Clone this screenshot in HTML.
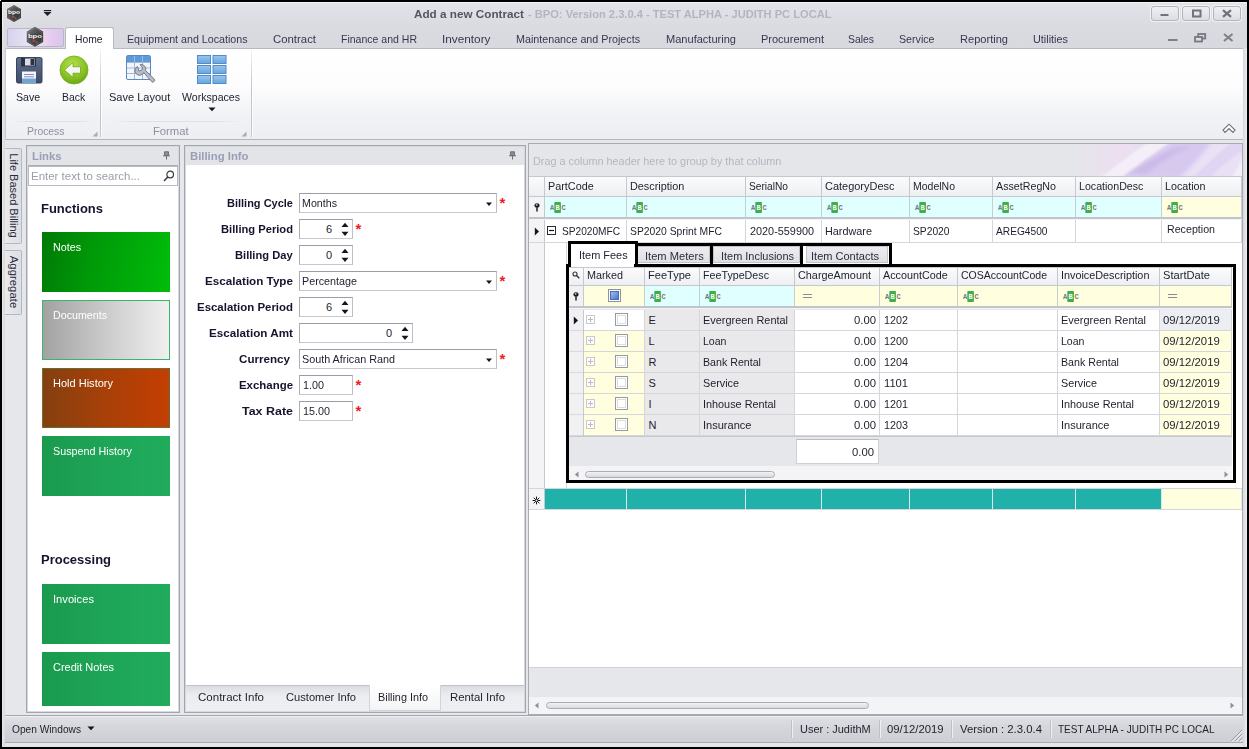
<!DOCTYPE html>
<html><head><meta charset="utf-8"><title>Add a new Contract</title>
<style>

html,body{margin:0;padding:0}
body{width:1249px;height:749px;position:relative;overflow:hidden;background:#000;font-family:"Liberation Sans",sans-serif;font-size:11px}
div,span.t,svg{position:absolute;box-sizing:border-box}
span.t{white-space:pre}

</style></head>
<body>
<div style="left:0px;top:0px;width:1249px;height:749px;background:#000"></div>
<div style="left:2px;top:2px;width:1245px;height:745px;background:linear-gradient(#e3e4e9 0,#dadbe1 24px,#d8d9df 48px,#dddee3 100%)"></div>
<div style="left:2px;top:2px;width:1245px;height:1px;background:#f4f4f7"></div>
<div style="left:2px;top:2px;width:1px;height:25px;background:#f0f0f4"></div>
<div style="left:0px;top:0px;width:1px;height:1px;background:#fff"></div>
<svg style="left:6px;top:5px" width="16" height="17" viewBox="0 0 16 17"><defs><linearGradient id="hxg" x1="0" y1="0" x2="1" y2="1"><stop offset="0" stop-color="#7a7a7c"/><stop offset="0.5" stop-color="#4a4a4c"/><stop offset="1" stop-color="#2b2b2d"/></linearGradient></defs><polygon points="8,0 15,4 15,13 8,17 1,13 1,4" fill="url(#hxg)"/><polygon points="8,1 14,4.6 14,12.4 8,16 2,12.4 2,4.6" fill="none" stroke="#8c8c8e" stroke-width="0.5" opacity="0.7"/><rect x="1.6" y="6.6" width="12.8" height="3.2" fill="#2a2a2c" opacity="0.6"/><text x="8" y="9.4" text-anchor="middle" font-family="Liberation Sans, sans-serif" font-weight="bold" font-size="4.6" textLength="12" lengthAdjust="spacingAndGlyphs" fill="#fff">bpo</text><rect x="6" y="11" width="2.2" height="2" fill="#c8343a"/><rect x="8.6" y="12.6" width="1.6" height="1.4" fill="#3d8a5a"/></svg>
<svg style="left:43px;top:9px" width="9" height="8" viewBox="0 0 9 8"><rect x="0.8" y="1" width="7.4" height="1.2" fill="#1e1e2d"/><polygon points="0.5,3 8.5,3 4.5,7" fill="#1e1e2d"/></svg>
<span class="t" style="font-size:11px;line-height:15px;color:#55565f;top:7px;left:414.4px;transform:scaleX(1.0649);transform-origin:0 50%;font-weight:bold;">Add a new Contract</span>
<span class="t" style="font-size:11px;line-height:15px;color:#b3b5be;top:7px;left:527.9px;transform:scaleX(1.0099);transform-origin:0 50%;font-weight:bold;">- BPO: Version 2.3.0.4 - TEST ALPHA - JUDITH PC LOCAL</span>
<div style="left:1151px;top:6px;width:28px;height:15px;border:1px solid #b4b6bf;border-radius:3px;background:linear-gradient(#f0f0f3,#dcdde2);box-shadow:0 0 0 1px rgba(255,255,255,.6)"></div>
<div style="left:1182px;top:6px;width:28px;height:15px;border:1px solid #b4b6bf;border-radius:3px;background:linear-gradient(#f0f0f3,#dcdde2);box-shadow:0 0 0 1px rgba(255,255,255,.6)"></div>
<div style="left:1213px;top:6px;width:28px;height:15px;border:1px solid #b4b6bf;border-radius:3px;background:linear-gradient(#f0f0f3,#dcdde2);box-shadow:0 0 0 1px rgba(255,255,255,.6)"></div>
<svg style="left:1160px;top:13px" width="10" height="4" viewBox="0 0 10 4"><rect x="0.5" y="1" width="8" height="2" fill="#6f717d"/></svg>
<svg style="left:1192px;top:9px" width="10" height="9" viewBox="0 0 10 9"><rect x="1" y="1.5" width="7.5" height="6" fill="none" stroke="#6f717d" stroke-width="2"/></svg>
<svg style="left:1222px;top:9px" width="10" height="9" viewBox="0 0 10 9"><path d="M1 1.2 L9 7.8 M9 1.2 L1 7.8" stroke="#6f717d" stroke-width="2.2"/></svg>
<div style="left:7px;top:28px;width:57px;height:19px;border:1px solid #b9b6c6;border-radius:2px;background:linear-gradient(90deg,#d6d2ee 0,#e6e0f4 30%,#eedff3 55%,#e6c9ee 80%,#d9c6ec 100%)"></div>
<svg style="left:25px;top:26px" width="20" height="22" viewBox="0 0 20 22"><g transform="translate(0.6,0.8) scale(1.17)"><defs><linearGradient id="hxg2" x1="0" y1="0" x2="1" y2="1"><stop offset="0" stop-color="#7a7a7c"/><stop offset="0.5" stop-color="#4a4a4c"/><stop offset="1" stop-color="#2b2b2d"/></linearGradient></defs><polygon points="8,0 15,4 15,13 8,17 1,13 1,4" fill="url(#hxg2)"/><polygon points="8,1 14,4.6 14,12.4 8,16 2,12.4 2,4.6" fill="none" stroke="#8c8c8e" stroke-width="0.5" opacity="0.7"/><rect x="1.6" y="6.6" width="12.8" height="3.2" fill="#2a2a2c" opacity="0.6"/><text x="8" y="9.4" text-anchor="middle" font-family="Liberation Sans, sans-serif" font-weight="bold" font-size="4.6" textLength="12" lengthAdjust="spacingAndGlyphs" fill="#fff">bpo</text><rect x="6" y="11" width="2.2" height="2" fill="#c8343a"/><rect x="8.6" y="12.6" width="1.6" height="1.4" fill="#3d8a5a"/></g></svg>
<div style="left:65px;top:27px;width:49px;height:22px;background:#fff;border:1px solid #b8bac2;border-bottom:none;border-radius:3px 3px 0 0"></div>
<span class="t" style="font-size:11px;line-height:15px;color:#1e1e2d;top:31.5px;left:74.9px;transform:scaleX(0.9372);transform-origin:0 50%;">Home</span>
<span class="t" style="font-size:11px;line-height:15px;color:#35374f;top:31.5px;left:127.4px;transform:scaleX(0.9706);transform-origin:0 50%;">Equipment and Locations</span>
<span class="t" style="font-size:11px;line-height:15px;color:#35374f;top:31.5px;left:273.15px;transform:scaleX(1.0342);transform-origin:0 50%;">Contract</span>
<span class="t" style="font-size:11px;line-height:15px;color:#35374f;top:31.5px;left:340.65px;transform:scaleX(0.956);transform-origin:0 50%;">Finance and HR</span>
<span class="t" style="font-size:11px;line-height:15px;color:#35374f;top:31.5px;left:441.9px;transform:scaleX(1.0718);transform-origin:0 50%;">Inventory</span>
<span class="t" style="font-size:11px;line-height:15px;color:#35374f;top:31.5px;left:516.15px;transform:scaleX(0.9749);transform-origin:0 50%;">Maintenance and Projects</span>
<span class="t" style="font-size:11px;line-height:15px;color:#35374f;top:31.5px;left:665.65px;transform:scaleX(1.004);transform-origin:0 50%;">Manufacturing</span>
<span class="t" style="font-size:11px;line-height:15px;color:#35374f;top:31.5px;left:760.65px;transform:scaleX(1.0002);transform-origin:0 50%;">Procurement</span>
<span class="t" style="font-size:11px;line-height:15px;color:#35374f;top:31.5px;left:848.15px;transform:scaleX(0.9444);transform-origin:0 50%;">Sales</span>
<span class="t" style="font-size:11px;line-height:15px;color:#35374f;top:31.5px;left:899.4px;transform:scaleX(0.9676);transform-origin:0 50%;">Service</span>
<span class="t" style="font-size:11px;line-height:15px;color:#35374f;top:31.5px;left:959.65px;transform:scaleX(1.0062);transform-origin:0 50%;">Reporting</span>
<span class="t" style="font-size:11px;line-height:15px;color:#35374f;top:31.5px;left:1032.9px;transform:scaleX(0.9872);transform-origin:0 50%;">Utilities</span>
<svg style="left:1167px;top:38px" width="12" height="4" viewBox="0 0 12 4"><rect x="1" y="1" width="9.5" height="2" fill="#7d7f8a"/></svg>
<svg style="left:1194px;top:33px" width="13" height="10" viewBox="0 0 13 10"><rect x="4.2" y="1" width="7" height="4.5" fill="none" stroke="#757783" stroke-width="1.8"/><rect x="1" y="4" width="7" height="4.5" fill="#dcdde2" stroke="#757783" stroke-width="1.8"/></svg>
<svg style="left:1223px;top:33px" width="11" height="9" viewBox="0 0 11 9"><path d="M1 1 L9.5 8 M9.5 1 L1 8" stroke="#7d7f8a" stroke-width="2"/></svg>
<div style="left:5px;top:48px;width:1239px;height:92px;background:linear-gradient(#fff 0,#fdfdfe 40%,#f1f2f5 75%,#eceef1 100%);border-top:1px solid #b8bac2;border-bottom:1px solid #b4b6be;border-left:1px solid #c9cbd1;border-right:1px solid #c9cbd1"></div>
<div style="left:66px;top:48px;width:47px;height:1px;background:#fff"></div>
<div style="left:100px;top:50px;width:1px;height:87px;background:linear-gradient(#f4f4f6,#c4c6cd 40%,#c4c6cd)"></div>
<div style="left:101px;top:50px;width:1px;height:87px;background:rgba(255,255,255,.8)"></div>
<div style="left:251px;top:50px;width:1px;height:87px;background:linear-gradient(#f4f4f6,#c4c6cd 40%,#c4c6cd)"></div>
<div style="left:252px;top:50px;width:1px;height:87px;background:rgba(255,255,255,.8)"></div>
<div style="left:14px;top:121px;width:80px;height:1px;background:linear-gradient(90deg,rgba(220,222,228,0),#dfe0e5 20%,#dfe0e5 80%,rgba(220,222,228,0))"></div>
<div style="left:112px;top:121px;width:130px;height:1px;background:linear-gradient(90deg,rgba(220,222,228,0),#dfe0e5 20%,#dfe0e5 80%,rgba(220,222,228,0))"></div>
<span class="t" style="font-size:11px;line-height:15px;color:#8d8fa0;top:123.5px;left:26.9px;transform:scaleX(0.9434);transform-origin:0 50%;">Process</span>
<span class="t" style="font-size:11px;line-height:15px;color:#8d8fa0;top:123.5px;left:153px;transform:scaleX(1.0217);transform-origin:0 50%;">Format</span>
<svg style="left:92px;top:131px" width="6" height="6" viewBox="0 0 6 6"><polygon points="5.5,0.5 5.5,5.5 0.5,5.5" fill="#a9abb5"/></svg>
<svg style="left:241px;top:131px" width="6" height="6" viewBox="0 0 6 6"><polygon points="5.5,0.5 5.5,5.5 0.5,5.5" fill="#a9abb5"/></svg>
<svg style="left:16px;top:57px" width="27" height="27" viewBox="0 0 27 27"><defs><linearGradient id="fl" x1="0" y1="0" x2="0" y2="1"><stop offset="0" stop-color="#5f6f8f"/><stop offset="1" stop-color="#3f4b66"/></linearGradient></defs>
<rect x="0.5" y="0.5" width="25.5" height="25.5" rx="1.5" fill="url(#fl)" stroke="#39445c"/>
<rect x="5" y="1" width="15" height="8.5" fill="#2c3142"/><rect x="9" y="1.5" width="9.5" height="7" fill="#d9dde6"/><rect x="14.5" y="2" width="3.5" height="6" fill="#2c3142"/>
<rect x="6" y="14.5" width="14" height="11" fill="#f4f6fa"/><rect x="6" y="21.5" width="14" height="4" fill="#6aa7d8"/><rect x="8" y="17" width="10" height="1" fill="#8f86c8"/><rect x="8" y="19.3" width="10" height="1" fill="#8f86c8"/></svg>
<svg style="left:59px;top:55px" width="30" height="30" viewBox="0 0 30 30"><defs><radialGradient id="gb" cx="0.45" cy="0.3" r="0.8"><stop offset="0" stop-color="#b4e04a"/><stop offset="0.6" stop-color="#86c122"/><stop offset="1" stop-color="#5f9a12"/></radialGradient></defs>
<circle cx="15" cy="15" r="14" fill="url(#gb)" stroke="#73ab1b" stroke-width="0.8"/>
<path d="M5.5 15 L14 7.5 L14 11.8 L21.5 11.8 L21.5 18.2 L14 18.2 L14 22.5 Z" fill="#f4f8ec" stroke="#5c8f16" stroke-width="0.6"/></svg>
<svg style="left:125px;top:54px" width="31" height="32" viewBox="0 0 31 32"><rect x="1.5" y="1.5" width="24" height="24" rx="1.5" fill="#f3f6fb" stroke="#5d86c4"/>
<rect x="2" y="2" width="23" height="6" fill="#5b9bd8"/>
<path d="M9.5 2 V25 M17.5 2 V25 M2 8.5 H25 M2 14 H25 M2 19.5 H25" stroke="#9fb9dd" stroke-width="1" fill="none"/>
<path d="M12.5 12.5 a4.6 4.6 0 1 0 6.2 6 L26.5 27.5 a1.8 1.8 0 0 0 2.6 -2.6 L20.6 16.6 a4.6 4.6 0 0 0 -5.6 -5.9 l2.6 2.7 -0.9 2.8 -2.8 0.8 z" fill="#b7bcc6" stroke="#6c727f" stroke-width="0.9"/></svg>
<svg style="left:197px;top:55px" width="30" height="30" viewBox="0 0 30 30"><defs><linearGradient id="wsg" x1="0" y1="0" x2="0" y2="1"><stop offset="0" stop-color="#9ac6ee"/><stop offset="1" stop-color="#67a4dc"/></linearGradient></defs><rect x="0.5" y="0.5" width="13" height="8" fill="url(#wsg)" stroke="#4f8ccb" stroke-width="1"/><rect x="16.0" y="0.5" width="13" height="8" fill="url(#wsg)" stroke="#4f8ccb" stroke-width="1"/><rect x="0.5" y="10.5" width="13" height="8" fill="url(#wsg)" stroke="#4f8ccb" stroke-width="1"/><rect x="16.0" y="10.5" width="13" height="8" fill="url(#wsg)" stroke="#4f8ccb" stroke-width="1"/><rect x="0.5" y="20.5" width="13" height="8" fill="url(#wsg)" stroke="#4f8ccb" stroke-width="1"/><rect x="16.0" y="20.5" width="13" height="8" fill="url(#wsg)" stroke="#4f8ccb" stroke-width="1"/></svg>
<span class="t" style="font-size:11px;line-height:15px;color:#1e1e2d;top:89.5px;left:16.1px;transform:scaleX(0.969);transform-origin:0 50%;">Save</span>
<span class="t" style="font-size:11px;line-height:15px;color:#1e1e2d;top:89.5px;left:61.8px;transform:scaleX(0.9481);transform-origin:0 50%;">Back</span>
<span class="t" style="font-size:11px;line-height:15px;color:#1e1e2d;top:89.5px;left:109px;transform:scaleX(1.0024);transform-origin:0 50%;">Save Layout</span>
<span class="t" style="font-size:11px;line-height:15px;color:#1e1e2d;top:89.5px;left:182.4px;transform:scaleX(0.9614);transform-origin:0 50%;">Workspaces</span>
<svg style="left:208px;top:107px" width="8" height="5" viewBox="0 0 8 5"><polygon points="0.5,0.5 7.5,0.5 4,4.3" fill="#15151f"/></svg>
<svg style="left:1222px;top:123px" width="14" height="11" viewBox="0 0 14 11"><path d="M7 1.2 L13 7 L11 9.4 L7 5.6 L3 9.4 L1 7 Z" fill="#fff" stroke="#6f7079" stroke-width="1.1" stroke-linejoin="miter"/></svg>
<div style="left:5px;top:140px;width:1239px;height:575px;background:#e6e7eb"></div>
<div style="left:5px;top:148px;width:17px;height:96px;border:1px solid #b6b8c0;border-left:none;border-radius:0 2px 2px 0;background:linear-gradient(90deg,#e9eaee,#dedfe4)"></div>
<span class="t" style="font-size:11px;line-height:15px;color:#2b2b3a;left:0;top:0;transform-origin:0 0;transform:translate(20.8px,153.25px) rotate(90deg) scaleX(1.0013);">Life Based Billing</span>
<div style="left:5px;top:250px;width:17px;height:65px;border:1px solid #b6b8c0;border-left:none;border-radius:0 2px 2px 0;background:linear-gradient(90deg,#e9eaee,#dedfe4)"></div>
<span class="t" style="font-size:11px;line-height:15px;color:#2b2b3a;left:0;top:0;transform-origin:0 0;transform:translate(20.8px,255.75px) rotate(90deg) scaleX(1.0342);">Aggregate</span>
<div style="left:26px;top:145px;width:154px;height:568px;border:1px solid #a3a5ae;background:#fff"></div>
<div style="left:27px;top:146px;width:152px;height:566px;border:1px solid #d8d9de"></div>
<div style="left:28px;top:147px;width:150px;height:18px;background:#e3e4e8"></div>
<span class="t" style="font-size:11px;line-height:15px;color:#9a9eb6;top:148.5px;left:31.9px;transform:scaleX(1.0301);transform-origin:0 50%;font-weight:bold;">Links</span>
<svg style="left:162px;top:151px" width="9" height="9" viewBox="0 0 9 9"><path d="M2.5 0.8 H6.5 V4.5 H2.5 Z M1 4.8 H8 M4.5 5 V8.5" fill="#8b8d99" stroke="#6c6e7a" stroke-width="1"/></svg>
<div style="left:28px;top:165px;width:150px;height:1px;background:#abadb5"></div>
<div style="left:28px;top:166px;width:150px;height:20px;border:1px solid #b9bbc2;background:#fff"></div>
<span class="t" style="font-size:11px;line-height:15px;color:#9c9da9;top:168.5px;left:31.1px;transform:scaleX(1.0424);transform-origin:0 50%;">Enter text to search...</span>
<svg style="left:163px;top:170px" width="12" height="12" viewBox="0 0 12 12"><circle cx="7.2" cy="4.5" r="3.3" fill="none" stroke="#3a3a46" stroke-width="1.2"/><path d="M4.8 7 L1 11" stroke="#3a3a46" stroke-width="1.5"/></svg>
<span class="t" style="font-size:13px;line-height:17px;color:#14142e;top:199.8px;left:41.4px;transform:scaleX(0.9982);transform-origin:0 50%;font-weight:bold;">Functions</span>
<span class="t" style="font-size:13px;line-height:17px;color:#14142e;top:551px;left:41.4px;transform:scaleX(0.9987);transform-origin:0 50%;font-weight:bold;">Processing</span>
<div style="left:42px;top:232px;width:128px;height:60px;background:linear-gradient(100deg,#007a06 0,#009a08 40%,#00bd0a 100%)"></div>
<span class="t" style="font-size:11px;line-height:15px;color:#fff;top:239.5px;left:52.9px;transform:scaleX(0.9739);transform-origin:0 50%;">Notes</span>
<div style="left:42px;top:300px;width:128px;height:60px;background:linear-gradient(90deg,#a2a2a2 0,#cfcfcf 55%,#f0f0f0 100%);border:1px solid #3cb46e"></div>
<span class="t" style="font-size:11px;line-height:15px;color:#fff;top:307.5px;left:52.9px;transform:scaleX(0.9705);transform-origin:0 50%;">Documents</span>
<div style="left:42px;top:368px;width:128px;height:60px;background:linear-gradient(90deg,#84400f 0,#a84008 50%,#c43e02 100%);border:1px solid rgba(60,150,90,.55)"></div>
<span class="t" style="font-size:11px;line-height:15px;color:#fff;top:375.5px;left:52.9px;transform:scaleX(1.0016);transform-origin:0 50%;">Hold History</span>
<div style="left:42px;top:436px;width:128px;height:60px;background:linear-gradient(90deg,#1a9a4e 0,#1ea557 50%,#20ac5c 100%)"></div>
<span class="t" style="font-size:11px;line-height:15px;color:#fff;top:443.5px;left:52.9px;transform:scaleX(0.9787);transform-origin:0 50%;">Suspend History</span>
<div style="left:42px;top:584px;width:128px;height:60px;background:linear-gradient(90deg,#1a9a4e 0,#1ea557 50%,#20ac5c 100%)"></div>
<span class="t" style="font-size:11px;line-height:15px;color:#fff;top:591.5px;left:52.9px;transform:scaleX(1.0159);transform-origin:0 50%;">Invoices</span>
<div style="left:42px;top:652px;width:128px;height:54px;background:linear-gradient(90deg,#1a9a4e 0,#1ea557 50%,#20ac5c 100%)"></div>
<span class="t" style="font-size:11px;line-height:15px;color:#fff;top:659.5px;left:52.9px;transform:scaleX(0.9977);transform-origin:0 50%;">Credit Notes</span>
<div style="left:184px;top:145px;width:342px;height:568px;border:1px solid #a3a5ae;background:#fff"></div>
<div style="left:185px;top:146px;width:340px;height:566px;border:1px solid #d8d9de"></div>
<div style="left:186px;top:147px;width:338px;height:18px;background:#e3e4e8"></div>
<span class="t" style="font-size:11px;line-height:15px;color:#9a9eb6;top:148.5px;left:189.9px;transform:scaleX(1.0294);transform-origin:0 50%;font-weight:bold;">Billing Info</span>
<svg style="left:508px;top:151px" width="9" height="9" viewBox="0 0 9 9"><path d="M2.5 0.8 H6.5 V4.5 H2.5 Z M1 4.8 H8 M4.5 5 V8.5" fill="#8b8d99" stroke="#6c6e7a" stroke-width="1"/></svg>
<span class="t" style="font-size:11px;line-height:15px;color:#14142e;top:196.1px;left:226.9px;transform:scaleX(0.9995);transform-origin:0 50%;font-weight:bold;">Billing Cycle</span>
<span class="t" style="font-size:11px;line-height:15px;color:#14142e;top:222.1px;left:220.9px;transform:scaleX(1.0154);transform-origin:0 50%;font-weight:bold;">Billing Period</span>
<span class="t" style="font-size:11px;line-height:15px;color:#14142e;top:248.1px;left:235.3px;transform:scaleX(1.0133);transform-origin:0 50%;font-weight:bold;">Billing Day</span>
<span class="t" style="font-size:11px;line-height:15px;color:#14142e;top:274.1px;left:204.9px;transform:scaleX(1.061);transform-origin:0 50%;font-weight:bold;">Escalation Type</span>
<span class="t" style="font-size:11px;line-height:15px;color:#14142e;top:300.1px;left:196.9px;transform:scaleX(1.0399);transform-origin:0 50%;font-weight:bold;">Escalation Period</span>
<span class="t" style="font-size:11px;line-height:15px;color:#14142e;top:326.1px;left:208.9px;transform:scaleX(1.0625);transform-origin:0 50%;font-weight:bold;">Escalation Amt</span>
<span class="t" style="font-size:11px;line-height:15px;color:#14142e;top:352.1px;left:238.9px;transform:scaleX(1.056);transform-origin:0 50%;font-weight:bold;">Currency</span>
<span class="t" style="font-size:11px;line-height:15px;color:#14142e;top:378.1px;left:238.9px;transform:scaleX(1.0391);transform-origin:0 50%;font-weight:bold;">Exchange</span>
<span class="t" style="font-size:11px;line-height:15px;color:#14142e;top:404.1px;left:241.9px;transform:scaleX(1.1322);transform-origin:0 50%;font-weight:bold;">Tax Rate</span>
<div style="left:299px;top:193.0px;width:198px;height:20px;border:1px solid;border-color:#9a9ca6 #bdbfc7 #c6c8ce #adafb7;background:#fff"></div>
<span class="t" style="font-size:11px;line-height:15px;color:#1e1e2d;top:195.5px;left:302.4px;transform:scaleX(0.9701);transform-origin:0 50%;">Months</span>
<svg style="left:484.5px;top:201.5px" width="8" height="5" viewBox="0 0 8 5"><polygon points="1,0.6 7,0.6 4,4" fill="#15151f"/></svg>
<span class="t" style="font-size:15px;line-height:19px;color:#ee1c1c;top:193.2px;left:499.5px;font-weight:bold;">*</span>
<div style="left:299px;top:271.0px;width:198px;height:20px;border:1px solid;border-color:#9a9ca6 #bdbfc7 #c6c8ce #adafb7;background:#fff"></div>
<span class="t" style="font-size:11px;line-height:15px;color:#1e1e2d;top:273.5px;left:302.4px;transform:scaleX(0.9775);transform-origin:0 50%;">Percentage</span>
<svg style="left:484.5px;top:279.5px" width="8" height="5" viewBox="0 0 8 5"><polygon points="1,0.6 7,0.6 4,4" fill="#15151f"/></svg>
<span class="t" style="font-size:15px;line-height:19px;color:#ee1c1c;top:271.2px;left:499.5px;font-weight:bold;">*</span>
<div style="left:299px;top:349.0px;width:198px;height:20px;border:1px solid;border-color:#9a9ca6 #bdbfc7 #c6c8ce #adafb7;background:#fff"></div>
<span class="t" style="font-size:11px;line-height:15px;color:#1e1e2d;top:351.5px;left:302.4px;transform:scaleX(0.981);transform-origin:0 50%;">South African Rand</span>
<svg style="left:484.5px;top:357.5px" width="8" height="5" viewBox="0 0 8 5"><polygon points="1,0.6 7,0.6 4,4" fill="#15151f"/></svg>
<span class="t" style="font-size:15px;line-height:19px;color:#ee1c1c;top:349.2px;left:499.5px;font-weight:bold;">*</span>
<div style="left:299px;top:219.0px;width:54px;height:20px;border:1px solid;border-color:#9a9ca6 #bdbfc7 #c6c8ce #adafb7;background:#fff"></div>
<span class="t" style="font-size:11px;line-height:15px;color:#1e1e2d;top:221.5px;left:326px;">6</span>
<svg style="left:340.5px;top:221.5px" width="8" height="6" viewBox="0 0 8 6"><polygon points="0.5,5 7.5,5 4,0.8" fill="#15151f"/></svg>
<svg style="left:340.5px;top:231.3px" width="8" height="6" viewBox="0 0 8 6"><polygon points="0.5,0.8 7.5,0.8 4,5" fill="#15151f"/></svg>
<div style="left:299px;top:245.0px;width:54px;height:20px;border:1px solid;border-color:#9a9ca6 #bdbfc7 #c6c8ce #adafb7;background:#fff"></div>
<span class="t" style="font-size:11px;line-height:15px;color:#1e1e2d;top:247.5px;left:326px;">0</span>
<svg style="left:340.5px;top:247.5px" width="8" height="6" viewBox="0 0 8 6"><polygon points="0.5,5 7.5,5 4,0.8" fill="#15151f"/></svg>
<svg style="left:340.5px;top:257.3px" width="8" height="6" viewBox="0 0 8 6"><polygon points="0.5,0.8 7.5,0.8 4,5" fill="#15151f"/></svg>
<div style="left:299px;top:297.0px;width:54px;height:20px;border:1px solid;border-color:#9a9ca6 #bdbfc7 #c6c8ce #adafb7;background:#fff"></div>
<span class="t" style="font-size:11px;line-height:15px;color:#1e1e2d;top:299.5px;left:326px;">6</span>
<svg style="left:340.5px;top:299.5px" width="8" height="6" viewBox="0 0 8 6"><polygon points="0.5,5 7.5,5 4,0.8" fill="#15151f"/></svg>
<svg style="left:340.5px;top:309.3px" width="8" height="6" viewBox="0 0 8 6"><polygon points="0.5,0.8 7.5,0.8 4,5" fill="#15151f"/></svg>
<div style="left:299px;top:323.0px;width:114px;height:20px;border:1px solid;border-color:#9a9ca6 #bdbfc7 #c6c8ce #adafb7;background:#fff"></div>
<span class="t" style="font-size:11px;line-height:15px;color:#1e1e2d;top:325.5px;left:386px;">0</span>
<svg style="left:400.5px;top:325.5px" width="8" height="6" viewBox="0 0 8 6"><polygon points="0.5,5 7.5,5 4,0.8" fill="#15151f"/></svg>
<svg style="left:400.5px;top:335.3px" width="8" height="6" viewBox="0 0 8 6"><polygon points="0.5,0.8 7.5,0.8 4,5" fill="#15151f"/></svg>
<span class="t" style="font-size:15px;line-height:19px;color:#ee1c1c;top:219.2px;left:355.5px;font-weight:bold;">*</span>
<div style="left:299px;top:375.0px;width:54px;height:20px;border:1px solid;border-color:#9a9ca6 #bdbfc7 #c6c8ce #adafb7;background:#fff"></div>
<span class="t" style="font-size:11px;line-height:15px;color:#1e1e2d;top:377.5px;left:303.2px;transform:scaleX(0.9803);transform-origin:0 50%;">1.00</span>
<span class="t" style="font-size:15px;line-height:19px;color:#ee1c1c;top:375.2px;left:355.5px;font-weight:bold;">*</span>
<div style="left:299px;top:401.0px;width:54px;height:20px;border:1px solid;border-color:#9a9ca6 #bdbfc7 #c6c8ce #adafb7;background:#fff"></div>
<span class="t" style="font-size:11px;line-height:15px;color:#1e1e2d;top:403.5px;left:303.2px;transform:scaleX(0.9807);transform-origin:0 50%;">15.00</span>
<span class="t" style="font-size:15px;line-height:19px;color:#ee1c1c;top:401.2px;left:355.5px;font-weight:bold;">*</span>
<div style="left:186px;top:686px;width:338px;height:25px;background:linear-gradient(#dcdde2,#ecedf0 40%,#eeeff2)"></div>
<div style="left:186px;top:685px;width:338px;height:1px;background:#c2c4cb"></div>
<div style="left:369px;top:685px;width:72px;height:26px;background:linear-gradient(#fff,#f4f4f6);border:1px solid #d2d4da;border-top:none"></div>
<span class="t" style="font-size:11px;line-height:15px;color:#1e1e2d;top:689.5px;left:197.9px;transform:scaleX(1.0479);transform-origin:0 50%;">Contract Info</span>
<span class="t" style="font-size:11px;line-height:15px;color:#1e1e2d;top:689.5px;left:285.9px;transform:scaleX(1.0131);transform-origin:0 50%;">Customer Info</span>
<span class="t" style="font-size:11px;line-height:15px;color:#1e1e2d;top:689.5px;left:377.9px;transform:scaleX(0.9849);transform-origin:0 50%;">Billing Info</span>
<span class="t" style="font-size:11px;line-height:15px;color:#1e1e2d;top:689.5px;left:449.9px;transform:scaleX(1.0338);transform-origin:0 50%;">Rental Info</span>
<div style="left:528px;top:143px;width:715px;height:572px;border:1px solid #a9abb3;background:#fff"></div>
<div style="left:529px;top:144px;width:713px;height:32px;background:#e5e6ea"></div>
<svg style="left:1060px;top:144px" width="182" height="32" viewBox="0 0 182 32"><defs>
<linearGradient id="sw0" x1="0" y1="0" x2="1" y2="0"><stop offset="0.08" stop-color="#ecdff1" stop-opacity="0"/><stop offset="0.3" stop-color="#ecdff1" stop-opacity="0.95"/><stop offset="0.6" stop-color="#e8dcf2"/><stop offset="1" stop-color="#e3d8f3"/></linearGradient>
<filter id="bl" x="-20%" y="-60%" width="140%" height="220%"><feGaussianBlur stdDeviation="2"/></filter>
<filter id="bl2" x="-20%" y="-60%" width="140%" height="220%"><feGaussianBlur stdDeviation="1.3"/></filter>
</defs>
<rect x="0" y="0" width="182" height="32" fill="url(#sw0)"/>
<g filter="url(#bl)" opacity="0.8">
<path d="M60 34 Q 90 12 112 -3 L153 -3 Q 140 14 121 34 Z" fill="#d3c4ee"/>
<path d="M68 30 Q 95 12 118 3 L 130 2 Q 102 16 86 30 Z" fill="#c4b1e6"/>
<path d="M120 34 Q 140 14 153 -3 L 184 -3 L184 34 Z" fill="#ebe3f6"/>
</g>
<g filter="url(#bl2)">
<path d="M40 34 Q 68 12 90 -3 L112 -3 Q 86 14 60 34 Z" fill="#f3eff8" opacity="0.95"/>
<path d="M132 34 Q 158 10 173 -3 L 183 -3 L 183 6 Q 165 18 150 34 Z" fill="#e0d5f2"/>
<path d="M172 34 Q 180 22 183 10 L184 34Z" fill="#f3eff9"/>
</g></svg>
<span class="t" style="font-size:11px;line-height:15px;color:#b4b6c0;top:153.8px;left:533px;transform:scaleX(0.986);transform-origin:0 50%;">Drag a column header here to group by that column</span>
<div style="left:529px;top:177px;width:16px;height:333px;background:#f4f4f7;border-right:1px solid #c6c8cf"></div>
<div style="left:529px;top:176px;width:16px;height:21px;background:linear-gradient(#fbfbfc,#f3f4f6 60%,#eeeff2);border-right:1px solid #c6c8cf;border-bottom:1px solid #c6c8cf;border-top:1px solid #c6c8cf"></div>
<div style="left:545px;top:176px;width:82px;height:21px;background:linear-gradient(#fbfbfc,#f3f4f6 60%,#eeeff2);border-right:1px solid #c6c8cf;border-bottom:1px solid #c6c8cf;border-top:1px solid #c6c8cf"></div>
<span class="t" style="font-size:11px;line-height:15px;color:#1e1e2d;top:178.5px;left:548px;transform:scaleX(0.9831);transform-origin:0 50%;">PartCode</span>
<div style="left:545px;top:197px;width:82px;height:20px;background:#e0ffff;border-right:1px solid #c9ccd2"></div>
<svg style="left:550px;top:202px" width="16" height="11" viewBox="0 0 16 11"><rect x="4.3" y="0" width="6.6" height="11" rx="0.8" fill="#3fae49"/><text x="0" y="8.3" font-family="Liberation Mono, monospace" font-size="7" font-weight="bold" fill="#74767f">A</text><text x="5.5" y="8.3" font-family="Liberation Mono, monospace" font-size="7" font-weight="bold" fill="#fff">B</text><text x="11.5" y="8.3" font-family="Liberation Mono, monospace" font-size="7" font-weight="bold" fill="#74767f">C</text></svg>
<div style="left:545px;top:220px;width:82px;height:23px;border-right:1px solid #d4d6dc;border-bottom:1px solid #d4d6dc"></div>
<div style="left:545px;top:489px;width:82px;height:20px;background:#20b2aa;border-right:1px solid #d7ecea"></div>
<div style="left:627px;top:176px;width:119px;height:21px;background:linear-gradient(#fbfbfc,#f3f4f6 60%,#eeeff2);border-right:1px solid #c6c8cf;border-bottom:1px solid #c6c8cf;border-top:1px solid #c6c8cf"></div>
<span class="t" style="font-size:11px;line-height:15px;color:#1e1e2d;top:178.5px;left:630px;transform:scaleX(0.9867);transform-origin:0 50%;">Description</span>
<div style="left:627px;top:197px;width:119px;height:20px;background:#e0ffff;border-right:1px solid #c9ccd2"></div>
<svg style="left:632px;top:202px" width="16" height="11" viewBox="0 0 16 11"><rect x="4.3" y="0" width="6.6" height="11" rx="0.8" fill="#3fae49"/><text x="0" y="8.3" font-family="Liberation Mono, monospace" font-size="7" font-weight="bold" fill="#74767f">A</text><text x="5.5" y="8.3" font-family="Liberation Mono, monospace" font-size="7" font-weight="bold" fill="#fff">B</text><text x="11.5" y="8.3" font-family="Liberation Mono, monospace" font-size="7" font-weight="bold" fill="#74767f">C</text></svg>
<div style="left:627px;top:220px;width:119px;height:23px;border-right:1px solid #d4d6dc;border-bottom:1px solid #d4d6dc"></div>
<div style="left:627px;top:489px;width:119px;height:20px;background:#20b2aa;border-right:1px solid #d7ecea"></div>
<div style="left:746px;top:176px;width:76px;height:21px;background:linear-gradient(#fbfbfc,#f3f4f6 60%,#eeeff2);border-right:1px solid #c6c8cf;border-bottom:1px solid #c6c8cf;border-top:1px solid #c6c8cf"></div>
<span class="t" style="font-size:11px;line-height:15px;color:#1e1e2d;top:178.5px;left:749px;transform:scaleX(0.9244);transform-origin:0 50%;">SerialNo</span>
<div style="left:746px;top:197px;width:76px;height:20px;background:#e0ffff;border-right:1px solid #c9ccd2"></div>
<svg style="left:751px;top:202px" width="16" height="11" viewBox="0 0 16 11"><rect x="4.3" y="0" width="6.6" height="11" rx="0.8" fill="#3fae49"/><text x="0" y="8.3" font-family="Liberation Mono, monospace" font-size="7" font-weight="bold" fill="#74767f">A</text><text x="5.5" y="8.3" font-family="Liberation Mono, monospace" font-size="7" font-weight="bold" fill="#fff">B</text><text x="11.5" y="8.3" font-family="Liberation Mono, monospace" font-size="7" font-weight="bold" fill="#74767f">C</text></svg>
<div style="left:746px;top:220px;width:76px;height:23px;border-right:1px solid #d4d6dc;border-bottom:1px solid #d4d6dc"></div>
<div style="left:746px;top:489px;width:76px;height:20px;background:#20b2aa;border-right:1px solid #d7ecea"></div>
<div style="left:822px;top:176px;width:88px;height:21px;background:linear-gradient(#fbfbfc,#f3f4f6 60%,#eeeff2);border-right:1px solid #c6c8cf;border-bottom:1px solid #c6c8cf;border-top:1px solid #c6c8cf"></div>
<span class="t" style="font-size:11px;line-height:15px;color:#1e1e2d;top:178.5px;left:825px;transform:scaleX(0.9971);transform-origin:0 50%;">CategoryDesc</span>
<div style="left:822px;top:197px;width:88px;height:20px;background:#e0ffff;border-right:1px solid #c9ccd2"></div>
<svg style="left:827px;top:202px" width="16" height="11" viewBox="0 0 16 11"><rect x="4.3" y="0" width="6.6" height="11" rx="0.8" fill="#3fae49"/><text x="0" y="8.3" font-family="Liberation Mono, monospace" font-size="7" font-weight="bold" fill="#74767f">A</text><text x="5.5" y="8.3" font-family="Liberation Mono, monospace" font-size="7" font-weight="bold" fill="#fff">B</text><text x="11.5" y="8.3" font-family="Liberation Mono, monospace" font-size="7" font-weight="bold" fill="#74767f">C</text></svg>
<div style="left:822px;top:220px;width:88px;height:23px;border-right:1px solid #d4d6dc;border-bottom:1px solid #d4d6dc"></div>
<div style="left:822px;top:489px;width:88px;height:20px;background:#20b2aa;border-right:1px solid #d7ecea"></div>
<div style="left:910px;top:176px;width:83px;height:21px;background:linear-gradient(#fbfbfc,#f3f4f6 60%,#eeeff2);border-right:1px solid #c6c8cf;border-bottom:1px solid #c6c8cf;border-top:1px solid #c6c8cf"></div>
<span class="t" style="font-size:11px;line-height:15px;color:#1e1e2d;top:178.5px;left:913px;transform:scaleX(0.9539);transform-origin:0 50%;">ModelNo</span>
<div style="left:910px;top:197px;width:83px;height:20px;background:#e0ffff;border-right:1px solid #c9ccd2"></div>
<svg style="left:915px;top:202px" width="16" height="11" viewBox="0 0 16 11"><rect x="4.3" y="0" width="6.6" height="11" rx="0.8" fill="#3fae49"/><text x="0" y="8.3" font-family="Liberation Mono, monospace" font-size="7" font-weight="bold" fill="#74767f">A</text><text x="5.5" y="8.3" font-family="Liberation Mono, monospace" font-size="7" font-weight="bold" fill="#fff">B</text><text x="11.5" y="8.3" font-family="Liberation Mono, monospace" font-size="7" font-weight="bold" fill="#74767f">C</text></svg>
<div style="left:910px;top:220px;width:83px;height:23px;border-right:1px solid #d4d6dc;border-bottom:1px solid #d4d6dc"></div>
<div style="left:910px;top:489px;width:83px;height:20px;background:#20b2aa;border-right:1px solid #d7ecea"></div>
<div style="left:993px;top:176px;width:83px;height:21px;background:linear-gradient(#fbfbfc,#f3f4f6 60%,#eeeff2);border-right:1px solid #c6c8cf;border-bottom:1px solid #c6c8cf;border-top:1px solid #c6c8cf"></div>
<span class="t" style="font-size:11px;line-height:15px;color:#1e1e2d;top:178.5px;left:996px;transform:scaleX(0.9714);transform-origin:0 50%;">AssetRegNo</span>
<div style="left:993px;top:197px;width:83px;height:20px;background:#e0ffff;border-right:1px solid #c9ccd2"></div>
<svg style="left:998px;top:202px" width="16" height="11" viewBox="0 0 16 11"><rect x="4.3" y="0" width="6.6" height="11" rx="0.8" fill="#3fae49"/><text x="0" y="8.3" font-family="Liberation Mono, monospace" font-size="7" font-weight="bold" fill="#74767f">A</text><text x="5.5" y="8.3" font-family="Liberation Mono, monospace" font-size="7" font-weight="bold" fill="#fff">B</text><text x="11.5" y="8.3" font-family="Liberation Mono, monospace" font-size="7" font-weight="bold" fill="#74767f">C</text></svg>
<div style="left:993px;top:220px;width:83px;height:23px;border-right:1px solid #d4d6dc;border-bottom:1px solid #d4d6dc"></div>
<div style="left:993px;top:489px;width:83px;height:20px;background:#20b2aa;border-right:1px solid #d7ecea"></div>
<div style="left:1076px;top:176px;width:86px;height:21px;background:linear-gradient(#fbfbfc,#f3f4f6 60%,#eeeff2);border-right:1px solid #c6c8cf;border-bottom:1px solid #c6c8cf;border-top:1px solid #c6c8cf"></div>
<span class="t" style="font-size:11px;line-height:15px;color:#1e1e2d;top:178.5px;left:1079px;transform:scaleX(0.9662);transform-origin:0 50%;">LocationDesc</span>
<div style="left:1076px;top:197px;width:86px;height:20px;background:#e0ffff;border-right:1px solid #c9ccd2"></div>
<svg style="left:1081px;top:202px" width="16" height="11" viewBox="0 0 16 11"><rect x="4.3" y="0" width="6.6" height="11" rx="0.8" fill="#3fae49"/><text x="0" y="8.3" font-family="Liberation Mono, monospace" font-size="7" font-weight="bold" fill="#74767f">A</text><text x="5.5" y="8.3" font-family="Liberation Mono, monospace" font-size="7" font-weight="bold" fill="#fff">B</text><text x="11.5" y="8.3" font-family="Liberation Mono, monospace" font-size="7" font-weight="bold" fill="#74767f">C</text></svg>
<div style="left:1076px;top:220px;width:86px;height:23px;border-right:1px solid #d4d6dc;border-bottom:1px solid #d4d6dc"></div>
<div style="left:1076px;top:489px;width:86px;height:20px;background:#20b2aa;border-right:1px solid #d7ecea"></div>
<div style="left:1162px;top:176px;width:80px;height:21px;background:linear-gradient(#fbfbfc,#f3f4f6 60%,#eeeff2);border-right:1px solid #c6c8cf;border-bottom:1px solid #c6c8cf;border-top:1px solid #c6c8cf"></div>
<span class="t" style="font-size:11px;line-height:15px;color:#1e1e2d;top:178.5px;left:1165px;transform:scaleX(0.9737);transform-origin:0 50%;">Location</span>
<div style="left:1162px;top:197px;width:80px;height:20px;background:#ffffe0;border-right:1px solid #c9ccd2"></div>
<svg style="left:1167px;top:202px" width="16" height="11" viewBox="0 0 16 11"><rect x="4.3" y="0" width="6.6" height="11" rx="0.8" fill="#3fae49"/><text x="0" y="8.3" font-family="Liberation Mono, monospace" font-size="7" font-weight="bold" fill="#74767f">A</text><text x="5.5" y="8.3" font-family="Liberation Mono, monospace" font-size="7" font-weight="bold" fill="#fff">B</text><text x="11.5" y="8.3" font-family="Liberation Mono, monospace" font-size="7" font-weight="bold" fill="#74767f">C</text></svg>
<div style="left:1162px;top:220px;width:80px;height:23px;border-right:1px solid #d4d6dc;border-bottom:1px solid #d4d6dc"></div>
<div style="left:1162px;top:489px;width:80px;height:20px;background:#ffffe0;border-right:1px solid #d7ecea"></div>
<svg style="left:534px;top:203px" width="6" height="10" viewBox="0 0 6 10"><ellipse cx="3" cy="2.4" rx="2.6" ry="2.2" fill="#1a1a22"/><ellipse cx="2.6" cy="1.9" rx="1" ry="0.6" fill="#fff"/><path d="M3 4 V8.6" stroke="#222" stroke-width="1.5"/></svg>
<div style="left:529px;top:217px;width:713px;height:2px;background:#c2c4cc"></div>
<div style="left:529px;top:219px;width:713px;height:1px;background:#f4f4f6"></div>
<div style="left:529px;top:242px;width:16px;height:1px;background:#d4d6dc"></div>
<div style="left:529px;top:488px;width:713px;height:1px;background:#d4d6dc"></div>
<div style="left:529px;top:509px;width:713px;height:1px;background:#d4d6dc"></div>
<svg style="left:534px;top:227px" width="6" height="9" viewBox="0 0 6 9"><polygon points="0.8,0.5 5,4.5 0.8,8.5" fill="#15151f"/></svg>
<svg style="left:547px;top:226px" width="9" height="9" viewBox="0 0 9 9"><rect x="0.5" y="0.5" width="8" height="8" fill="#fff" stroke="#2a2a34"/><path d="M2 4.5 H7" stroke="#15151f" stroke-width="1.2"/></svg>
<span class="t" style="font-size:11px;line-height:15px;color:#1e1e2d;top:223.8px;left:561.9px;transform:scaleX(0.9209);transform-origin:0 50%;">SP2020MFC</span>
<span class="t" style="font-size:11px;line-height:15px;color:#1e1e2d;top:223.8px;left:629.6px;transform:scaleX(0.9404);transform-origin:0 50%;">SP2020 Sprint MFC</span>
<span class="t" style="font-size:11px;line-height:15px;color:#1e1e2d;top:223.8px;left:749.8px;transform:scaleX(0.987);transform-origin:0 50%;">2020-559900</span>
<span class="t" style="font-size:11px;line-height:15px;color:#1e1e2d;top:223.8px;left:825.1px;transform:scaleX(0.9856);transform-origin:0 50%;">Hardware</span>
<span class="t" style="font-size:11px;line-height:15px;color:#1e1e2d;top:223.8px;left:912.9px;transform:scaleX(0.9322);transform-origin:0 50%;">SP2020</span>
<span class="t" style="font-size:11px;line-height:15px;color:#1e1e2d;top:223.8px;left:995.9px;transform:scaleX(0.9253);transform-origin:0 50%;">AREG4500</span>
<span class="t" style="font-size:11px;line-height:15px;color:#1e1e2d;top:221.5px;left:1166.6px;transform:scaleX(0.9688);transform-origin:0 50%;">Reception</span>
<svg style="left:532px;top:496px" width="9" height="9" viewBox="0 0 9 9"><path d="M4.5 0.6 V8.4 M0.6 4.5 H8.4 M1.7 1.7 L7.3 7.3 M7.3 1.7 L1.7 7.3" stroke="#15151f" stroke-width="1"/><circle cx="4.5" cy="4.5" r="1" fill="#f4f4f7"/></svg>
<div style="left:566px;top:243px;width:1px;height:246px;background:#d4d6dc"></div>
<div style="left:529px;top:667px;width:713px;height:30px;background:#e6e7eb;border-top:1px solid #d0d2d8"></div>
<div style="left:529px;top:697px;width:713px;height:17px;background:#f4f4f6"></div>
<div style="left:546px;top:702px;width:323px;height:7px;border:1px solid #a9abb5;border-radius:4px;background:linear-gradient(#f2f2f5,#d9dade)"></div>
<svg style="left:534px;top:702px" width="5" height="7" viewBox="0 0 5 7"><polygon points="4.5,0.5 4.5,6.5 0.8,3.5" fill="#8d8f9b"/></svg>
<svg style="left:1230px;top:702px" width="5" height="7" viewBox="0 0 5 7"><polygon points="0.5,0.5 0.5,6.5 4.2,3.5" fill="#8d8f9b"/></svg>
<div style="left:571px;top:244px;width:64px;height:23px;background:#fff"></div>
<div style="left:637px;top:246px;width:73px;height:17px;background:linear-gradient(#ececf0,#dfe0e5);border:1px solid #c2c4cc"></div>
<div style="left:713px;top:246px;width:87px;height:17px;background:linear-gradient(#ececf0,#dfe0e5);border:1px solid #c2c4cc"></div>
<div style="left:806px;top:246px;width:82px;height:17px;background:linear-gradient(#ececf0,#dfe0e5);border:1px solid #c2c4cc"></div>
<span class="t" style="font-size:11px;line-height:15px;color:#1e1e2d;top:247.5px;left:579px;transform:scaleX(0.9937);transform-origin:0 50%;">Item Fees</span>
<span class="t" style="font-size:11px;line-height:15px;color:#2d2d3c;top:248.5px;left:645.1px;transform:scaleX(1.0107);transform-origin:0 50%;">Item Meters</span>
<span class="t" style="font-size:11px;line-height:15px;color:#2d2d3c;top:248.5px;left:720.8px;transform:scaleX(0.9949);transform-origin:0 50%;">Item Inclusions</span>
<span class="t" style="font-size:11px;line-height:15px;color:#2d2d3c;top:248.5px;left:811.2px;transform:scaleX(1.0021);transform-origin:0 50%;">Item Contacts</span>
<div style="left:569px;top:267px;width:663px;height:214px;background:#fff"></div>
<div style="left:569px;top:267px;width:15px;height:170px;background:#f1f1f4;border-right:1px solid #c6c8cf"></div>
<div style="left:569px;top:267px;width:15px;height:19px;background:linear-gradient(#fbfbfc,#f3f4f6 60%,#eeeff2);border-right:1px solid #c6c8cf;border-bottom:1px solid #c6c8cf;border-top:1px solid #c6c8cf"></div>
<svg style="left:572px;top:271px" width="8" height="8" viewBox="0 0 8 8"><circle cx="3" cy="3" r="2" fill="none" stroke="#333" stroke-width="1.1"/><path d="M4.5 4.5 L7.3 7.3" stroke="#333" stroke-width="1.3"/></svg>
<svg style="left:573px;top:292px" width="6" height="10" viewBox="0 0 6 10"><ellipse cx="3" cy="2.4" rx="2.6" ry="2.2" fill="#1a1a22"/><ellipse cx="2.6" cy="1.9" rx="1" ry="0.6" fill="#fff"/><path d="M3 4 V8.6" stroke="#222" stroke-width="1.5"/></svg>
<div style="left:584px;top:267px;width:61px;height:19px;background:linear-gradient(#fbfbfc,#f3f4f6 60%,#eeeff2);border-right:1px solid #c6c8cf;border-bottom:1px solid #c6c8cf;border-top:1px solid #c6c8cf"></div>
<span class="t" style="font-size:11px;line-height:15px;color:#1e1e2d;top:268px;left:587px;transform:scaleX(0.9813);transform-origin:0 50%;">Marked</span>
<div style="left:584px;top:286px;width:61px;height:20px;background:#ffffe0;border-right:1px solid #c9ccd2"></div>
<div style="left:584px;top:310px;width:61px;height:21px;background:#fff;border-right:1px solid #d4d6dc;border-bottom:1px solid #d4d6dc"></div>
<div style="left:584px;top:331px;width:61px;height:21px;background:#ffffe0;border-right:1px solid #d4d6dc;border-bottom:1px solid #d4d6dc"></div>
<div style="left:584px;top:352px;width:61px;height:21px;background:#ffffe0;border-right:1px solid #d4d6dc;border-bottom:1px solid #d4d6dc"></div>
<div style="left:584px;top:373px;width:61px;height:21px;background:#ffffe0;border-right:1px solid #d4d6dc;border-bottom:1px solid #d4d6dc"></div>
<div style="left:584px;top:394px;width:61px;height:21px;background:#ffffe0;border-right:1px solid #d4d6dc;border-bottom:1px solid #d4d6dc"></div>
<div style="left:584px;top:415px;width:61px;height:21px;background:#ffffe0;border-right:1px solid #d4d6dc;border-bottom:1px solid #d4d6dc"></div>
<div style="left:645px;top:267px;width:55px;height:19px;background:linear-gradient(#fbfbfc,#f3f4f6 60%,#eeeff2);border-right:1px solid #c6c8cf;border-bottom:1px solid #c6c8cf;border-top:1px solid #c6c8cf"></div>
<span class="t" style="font-size:11px;line-height:15px;color:#1e1e2d;top:268px;left:648px;transform:scaleX(1.0044);transform-origin:0 50%;">FeeType</span>
<div style="left:645px;top:286px;width:55px;height:20px;background:#e0ffff;border-right:1px solid #c9ccd2"></div>
<svg style="left:650px;top:291px" width="16" height="11" viewBox="0 0 16 11"><rect x="4.3" y="0" width="6.6" height="11" rx="0.8" fill="#3fae49"/><text x="0" y="8.3" font-family="Liberation Mono, monospace" font-size="7" font-weight="bold" fill="#74767f">A</text><text x="5.5" y="8.3" font-family="Liberation Mono, monospace" font-size="7" font-weight="bold" fill="#fff">B</text><text x="11.5" y="8.3" font-family="Liberation Mono, monospace" font-size="7" font-weight="bold" fill="#74767f">C</text></svg>
<div style="left:645px;top:310px;width:55px;height:21px;background:#e9e9eb;border-right:1px solid #d4d6dc;border-bottom:1px solid #d4d6dc"></div>
<div style="left:645px;top:331px;width:55px;height:21px;background:#e9e9eb;border-right:1px solid #d4d6dc;border-bottom:1px solid #d4d6dc"></div>
<div style="left:645px;top:352px;width:55px;height:21px;background:#e9e9eb;border-right:1px solid #d4d6dc;border-bottom:1px solid #d4d6dc"></div>
<div style="left:645px;top:373px;width:55px;height:21px;background:#e9e9eb;border-right:1px solid #d4d6dc;border-bottom:1px solid #d4d6dc"></div>
<div style="left:645px;top:394px;width:55px;height:21px;background:#e9e9eb;border-right:1px solid #d4d6dc;border-bottom:1px solid #d4d6dc"></div>
<div style="left:645px;top:415px;width:55px;height:21px;background:#e9e9eb;border-right:1px solid #d4d6dc;border-bottom:1px solid #d4d6dc"></div>
<div style="left:700px;top:267px;width:95px;height:19px;background:linear-gradient(#fbfbfc,#f3f4f6 60%,#eeeff2);border-right:1px solid #c6c8cf;border-bottom:1px solid #c6c8cf;border-top:1px solid #c6c8cf"></div>
<span class="t" style="font-size:11px;line-height:15px;color:#1e1e2d;top:268px;left:703px;transform:scaleX(0.9724);transform-origin:0 50%;">FeeTypeDesc</span>
<div style="left:700px;top:286px;width:95px;height:20px;background:#e0ffff;border-right:1px solid #c9ccd2"></div>
<svg style="left:705px;top:291px" width="16" height="11" viewBox="0 0 16 11"><rect x="4.3" y="0" width="6.6" height="11" rx="0.8" fill="#3fae49"/><text x="0" y="8.3" font-family="Liberation Mono, monospace" font-size="7" font-weight="bold" fill="#74767f">A</text><text x="5.5" y="8.3" font-family="Liberation Mono, monospace" font-size="7" font-weight="bold" fill="#fff">B</text><text x="11.5" y="8.3" font-family="Liberation Mono, monospace" font-size="7" font-weight="bold" fill="#74767f">C</text></svg>
<div style="left:700px;top:310px;width:95px;height:21px;background:#e9e9eb;border-right:1px solid #d4d6dc;border-bottom:1px solid #d4d6dc"></div>
<div style="left:700px;top:331px;width:95px;height:21px;background:#e9e9eb;border-right:1px solid #d4d6dc;border-bottom:1px solid #d4d6dc"></div>
<div style="left:700px;top:352px;width:95px;height:21px;background:#e9e9eb;border-right:1px solid #d4d6dc;border-bottom:1px solid #d4d6dc"></div>
<div style="left:700px;top:373px;width:95px;height:21px;background:#e9e9eb;border-right:1px solid #d4d6dc;border-bottom:1px solid #d4d6dc"></div>
<div style="left:700px;top:394px;width:95px;height:21px;background:#e9e9eb;border-right:1px solid #d4d6dc;border-bottom:1px solid #d4d6dc"></div>
<div style="left:700px;top:415px;width:95px;height:21px;background:#e9e9eb;border-right:1px solid #d4d6dc;border-bottom:1px solid #d4d6dc"></div>
<div style="left:795px;top:267px;width:85px;height:19px;background:linear-gradient(#fbfbfc,#f3f4f6 60%,#eeeff2);border-right:1px solid #c6c8cf;border-bottom:1px solid #c6c8cf;border-top:1px solid #c6c8cf"></div>
<span class="t" style="font-size:11px;line-height:15px;color:#1e1e2d;top:268px;left:798px;transform:scaleX(0.9865);transform-origin:0 50%;">ChargeAmount</span>
<div style="left:795px;top:286px;width:85px;height:20px;background:#ffffe0;border-right:1px solid #c9ccd2"></div>
<div style="left:803px;top:294px;width:9px;height:1px;background:#8a8c96"></div>
<div style="left:803px;top:297px;width:9px;height:1px;background:#8a8c96"></div>
<div style="left:795px;top:310px;width:85px;height:21px;background:#fff;border-right:1px solid #d4d6dc;border-bottom:1px solid #d4d6dc"></div>
<div style="left:795px;top:331px;width:85px;height:21px;background:#fff;border-right:1px solid #d4d6dc;border-bottom:1px solid #d4d6dc"></div>
<div style="left:795px;top:352px;width:85px;height:21px;background:#fff;border-right:1px solid #d4d6dc;border-bottom:1px solid #d4d6dc"></div>
<div style="left:795px;top:373px;width:85px;height:21px;background:#fff;border-right:1px solid #d4d6dc;border-bottom:1px solid #d4d6dc"></div>
<div style="left:795px;top:394px;width:85px;height:21px;background:#fff;border-right:1px solid #d4d6dc;border-bottom:1px solid #d4d6dc"></div>
<div style="left:795px;top:415px;width:85px;height:21px;background:#fff;border-right:1px solid #d4d6dc;border-bottom:1px solid #d4d6dc"></div>
<div style="left:880px;top:267px;width:78px;height:19px;background:linear-gradient(#fbfbfc,#f3f4f6 60%,#eeeff2);border-right:1px solid #c6c8cf;border-bottom:1px solid #c6c8cf;border-top:1px solid #c6c8cf"></div>
<span class="t" style="font-size:11px;line-height:15px;color:#1e1e2d;top:268px;left:883px;transform:scaleX(0.9796);transform-origin:0 50%;">AccountCode</span>
<div style="left:880px;top:286px;width:78px;height:20px;background:#ffffe0;border-right:1px solid #c9ccd2"></div>
<svg style="left:885px;top:291px" width="16" height="11" viewBox="0 0 16 11"><rect x="4.3" y="0" width="6.6" height="11" rx="0.8" fill="#3fae49"/><text x="0" y="8.3" font-family="Liberation Mono, monospace" font-size="7" font-weight="bold" fill="#74767f">A</text><text x="5.5" y="8.3" font-family="Liberation Mono, monospace" font-size="7" font-weight="bold" fill="#fff">B</text><text x="11.5" y="8.3" font-family="Liberation Mono, monospace" font-size="7" font-weight="bold" fill="#74767f">C</text></svg>
<div style="left:880px;top:310px;width:78px;height:21px;background:#fff;border-right:1px solid #d4d6dc;border-bottom:1px solid #d4d6dc"></div>
<div style="left:880px;top:331px;width:78px;height:21px;background:#fff;border-right:1px solid #d4d6dc;border-bottom:1px solid #d4d6dc"></div>
<div style="left:880px;top:352px;width:78px;height:21px;background:#fff;border-right:1px solid #d4d6dc;border-bottom:1px solid #d4d6dc"></div>
<div style="left:880px;top:373px;width:78px;height:21px;background:#fff;border-right:1px solid #d4d6dc;border-bottom:1px solid #d4d6dc"></div>
<div style="left:880px;top:394px;width:78px;height:21px;background:#fff;border-right:1px solid #d4d6dc;border-bottom:1px solid #d4d6dc"></div>
<div style="left:880px;top:415px;width:78px;height:21px;background:#fff;border-right:1px solid #d4d6dc;border-bottom:1px solid #d4d6dc"></div>
<div style="left:958px;top:267px;width:100px;height:19px;background:linear-gradient(#fbfbfc,#f3f4f6 60%,#eeeff2);border-right:1px solid #c6c8cf;border-bottom:1px solid #c6c8cf;border-top:1px solid #c6c8cf"></div>
<span class="t" style="font-size:11px;line-height:15px;color:#1e1e2d;top:268px;left:961px;transform:scaleX(0.9567);transform-origin:0 50%;">COSAccountCode</span>
<div style="left:958px;top:286px;width:100px;height:20px;background:#ffffe0;border-right:1px solid #c9ccd2"></div>
<svg style="left:963px;top:291px" width="16" height="11" viewBox="0 0 16 11"><rect x="4.3" y="0" width="6.6" height="11" rx="0.8" fill="#3fae49"/><text x="0" y="8.3" font-family="Liberation Mono, monospace" font-size="7" font-weight="bold" fill="#74767f">A</text><text x="5.5" y="8.3" font-family="Liberation Mono, monospace" font-size="7" font-weight="bold" fill="#fff">B</text><text x="11.5" y="8.3" font-family="Liberation Mono, monospace" font-size="7" font-weight="bold" fill="#74767f">C</text></svg>
<div style="left:958px;top:310px;width:100px;height:21px;background:#fff;border-right:1px solid #d4d6dc;border-bottom:1px solid #d4d6dc"></div>
<div style="left:958px;top:331px;width:100px;height:21px;background:#fff;border-right:1px solid #d4d6dc;border-bottom:1px solid #d4d6dc"></div>
<div style="left:958px;top:352px;width:100px;height:21px;background:#fff;border-right:1px solid #d4d6dc;border-bottom:1px solid #d4d6dc"></div>
<div style="left:958px;top:373px;width:100px;height:21px;background:#fff;border-right:1px solid #d4d6dc;border-bottom:1px solid #d4d6dc"></div>
<div style="left:958px;top:394px;width:100px;height:21px;background:#fff;border-right:1px solid #d4d6dc;border-bottom:1px solid #d4d6dc"></div>
<div style="left:958px;top:415px;width:100px;height:21px;background:#fff;border-right:1px solid #d4d6dc;border-bottom:1px solid #d4d6dc"></div>
<div style="left:1058px;top:267px;width:102px;height:19px;background:linear-gradient(#fbfbfc,#f3f4f6 60%,#eeeff2);border-right:1px solid #c6c8cf;border-bottom:1px solid #c6c8cf;border-top:1px solid #c6c8cf"></div>
<span class="t" style="font-size:11px;line-height:15px;color:#1e1e2d;top:268px;left:1061px;transform:scaleX(0.9836);transform-origin:0 50%;">InvoiceDescription</span>
<div style="left:1058px;top:286px;width:102px;height:20px;background:#ffffe0;border-right:1px solid #c9ccd2"></div>
<svg style="left:1063px;top:291px" width="16" height="11" viewBox="0 0 16 11"><rect x="4.3" y="0" width="6.6" height="11" rx="0.8" fill="#3fae49"/><text x="0" y="8.3" font-family="Liberation Mono, monospace" font-size="7" font-weight="bold" fill="#74767f">A</text><text x="5.5" y="8.3" font-family="Liberation Mono, monospace" font-size="7" font-weight="bold" fill="#fff">B</text><text x="11.5" y="8.3" font-family="Liberation Mono, monospace" font-size="7" font-weight="bold" fill="#74767f">C</text></svg>
<div style="left:1058px;top:310px;width:102px;height:21px;background:#fff;border-right:1px solid #d4d6dc;border-bottom:1px solid #d4d6dc"></div>
<div style="left:1058px;top:331px;width:102px;height:21px;background:#fff;border-right:1px solid #d4d6dc;border-bottom:1px solid #d4d6dc"></div>
<div style="left:1058px;top:352px;width:102px;height:21px;background:#fff;border-right:1px solid #d4d6dc;border-bottom:1px solid #d4d6dc"></div>
<div style="left:1058px;top:373px;width:102px;height:21px;background:#fff;border-right:1px solid #d4d6dc;border-bottom:1px solid #d4d6dc"></div>
<div style="left:1058px;top:394px;width:102px;height:21px;background:#fff;border-right:1px solid #d4d6dc;border-bottom:1px solid #d4d6dc"></div>
<div style="left:1058px;top:415px;width:102px;height:21px;background:#fff;border-right:1px solid #d4d6dc;border-bottom:1px solid #d4d6dc"></div>
<div style="left:1160px;top:267px;width:72px;height:19px;background:linear-gradient(#fbfbfc,#f3f4f6 60%,#eeeff2);border-right:1px solid #c6c8cf;border-bottom:1px solid #c6c8cf;border-top:1px solid #c6c8cf"></div>
<span class="t" style="font-size:11px;line-height:15px;color:#1e1e2d;top:268px;left:1163px;transform:scaleX(1.0114);transform-origin:0 50%;">StartDate</span>
<div style="left:1160px;top:286px;width:72px;height:20px;background:#ffffe0;border-right:1px solid #c9ccd2"></div>
<div style="left:1168px;top:294px;width:9px;height:1px;background:#8a8c96"></div>
<div style="left:1168px;top:297px;width:9px;height:1px;background:#8a8c96"></div>
<div style="left:1160px;top:310px;width:72px;height:21px;background:#eceef2;border-right:1px solid #d4d6dc;border-bottom:1px solid #d4d6dc"></div>
<div style="left:1160px;top:331px;width:72px;height:21px;background:#ffffe0;border-right:1px solid #d4d6dc;border-bottom:1px solid #d4d6dc"></div>
<div style="left:1160px;top:352px;width:72px;height:21px;background:#ffffe0;border-right:1px solid #d4d6dc;border-bottom:1px solid #d4d6dc"></div>
<div style="left:1160px;top:373px;width:72px;height:21px;background:#ffffe0;border-right:1px solid #d4d6dc;border-bottom:1px solid #d4d6dc"></div>
<div style="left:1160px;top:394px;width:72px;height:21px;background:#ffffe0;border-right:1px solid #d4d6dc;border-bottom:1px solid #d4d6dc"></div>
<div style="left:1160px;top:415px;width:72px;height:21px;background:#ffffe0;border-right:1px solid #d4d6dc;border-bottom:1px solid #d4d6dc"></div>
<div style="left:569px;top:306px;width:663px;height:3px;background:linear-gradient(#c2c4cc 0,#c2c4cc 66%,#f4f4f6 67%)"></div>
<div style="left:570px;top:309px;width:662px;height:1px;background:#e9e9ec"></div>
<div style="left:569px;top:330px;width:14px;height:1px;background:#d9dae0"></div>
<div style="left:569px;top:351px;width:14px;height:1px;background:#d9dae0"></div>
<div style="left:569px;top:372px;width:14px;height:1px;background:#d9dae0"></div>
<div style="left:569px;top:393px;width:14px;height:1px;background:#d9dae0"></div>
<div style="left:569px;top:414px;width:14px;height:1px;background:#d9dae0"></div>
<div style="left:569px;top:435px;width:14px;height:1px;background:#d9dae0"></div>
<div style="left:608px;top:289px;width:13px;height:13px;border:1px solid #8f919c;background:#fff"></div>
<div style="left:610px;top:291px;width:9px;height:9px;background:linear-gradient(135deg,#9dbdec,#4a78cc);border:1px solid #4a6cb8"></div>
<svg style="left:573px;top:315.8px" width="6" height="9" viewBox="0 0 6 9"><polygon points="0.8,0.5 5,4.5 0.8,8.5" fill="#15151f"/></svg>
<svg style="left:586px;top:315px" width="9" height="9" viewBox="0 0 9 9"><rect x="0.5" y="0.5" width="8" height="8" fill="#fdfdfd" stroke="#c9cad0"/><path d="M2 4.5 H7 M4.5 2 V7" stroke="#b9bac2" stroke-width="1"/></svg>
<div style="left:615px;top:313px;width:13px;height:13px;border:1px solid #9799a4;background:#fff;box-shadow:inset 0 0 0 1px #fff,inset 0 0 0 2px #dcdde3"></div>
<span class="t" style="font-size:11px;line-height:15px;color:#1e1e2d;top:312.5px;left:648.5px;">E</span>
<span class="t" style="font-size:11px;line-height:15px;color:#1e1e2d;top:312.5px;left:702.8px;transform:scaleX(0.9929);transform-origin:0 50%;">Evergreen Rental</span>
<span class="t" style="font-size:11px;line-height:15px;color:#1e1e2d;top:312.5px;left:853.6px;transform:scaleX(1.027);transform-origin:0 50%;">0.00</span>
<span class="t" style="font-size:11px;line-height:15px;color:#1e1e2d;top:312.5px;left:884px;transform:scaleX(0.9802);transform-origin:0 50%;">1202</span>
<span class="t" style="font-size:11px;line-height:15px;color:#1e1e2d;top:312.5px;left:1061.1px;transform:scaleX(0.9929);transform-origin:0 50%;">Evergreen Rental</span>
<span class="t" style="font-size:11px;line-height:15px;color:#1e1e2d;top:312.5px;left:1163.1px;transform:scaleX(1.0316);transform-origin:0 50%;">09/12/2019</span>
<svg style="left:586px;top:336px" width="9" height="9" viewBox="0 0 9 9"><rect x="0.5" y="0.5" width="8" height="8" fill="#fdfdfd" stroke="#c9cad0"/><path d="M2 4.5 H7 M4.5 2 V7" stroke="#b9bac2" stroke-width="1"/></svg>
<div style="left:615px;top:334px;width:13px;height:13px;border:1px solid #9799a4;background:#fff;box-shadow:inset 0 0 0 1px #fff,inset 0 0 0 2px #dcdde3"></div>
<span class="t" style="font-size:11px;line-height:15px;color:#1e1e2d;top:333.5px;left:648.5px;">L</span>
<span class="t" style="font-size:11px;line-height:15px;color:#1e1e2d;top:333.5px;left:702.8px;transform:scaleX(0.9598);transform-origin:0 50%;">Loan</span>
<span class="t" style="font-size:11px;line-height:15px;color:#1e1e2d;top:333.5px;left:853.6px;transform:scaleX(1.027);transform-origin:0 50%;">0.00</span>
<span class="t" style="font-size:11px;line-height:15px;color:#1e1e2d;top:333.5px;left:884px;transform:scaleX(0.9802);transform-origin:0 50%;">1200</span>
<span class="t" style="font-size:11px;line-height:15px;color:#1e1e2d;top:333.5px;left:1061.1px;transform:scaleX(0.9598);transform-origin:0 50%;">Loan</span>
<span class="t" style="font-size:11px;line-height:15px;color:#1e1e2d;top:333.5px;left:1163.1px;transform:scaleX(1.0316);transform-origin:0 50%;">09/12/2019</span>
<svg style="left:586px;top:357px" width="9" height="9" viewBox="0 0 9 9"><rect x="0.5" y="0.5" width="8" height="8" fill="#fdfdfd" stroke="#c9cad0"/><path d="M2 4.5 H7 M4.5 2 V7" stroke="#b9bac2" stroke-width="1"/></svg>
<div style="left:615px;top:355px;width:13px;height:13px;border:1px solid #9799a4;background:#fff;box-shadow:inset 0 0 0 1px #fff,inset 0 0 0 2px #dcdde3"></div>
<span class="t" style="font-size:11px;line-height:15px;color:#1e1e2d;top:354.5px;left:648.5px;">R</span>
<span class="t" style="font-size:11px;line-height:15px;color:#1e1e2d;top:354.5px;left:702.8px;transform:scaleX(0.9677);transform-origin:0 50%;">Bank Rental</span>
<span class="t" style="font-size:11px;line-height:15px;color:#1e1e2d;top:354.5px;left:853.6px;transform:scaleX(1.027);transform-origin:0 50%;">0.00</span>
<span class="t" style="font-size:11px;line-height:15px;color:#1e1e2d;top:354.5px;left:884px;transform:scaleX(0.9802);transform-origin:0 50%;">1204</span>
<span class="t" style="font-size:11px;line-height:15px;color:#1e1e2d;top:354.5px;left:1061.1px;transform:scaleX(0.9677);transform-origin:0 50%;">Bank Rental</span>
<span class="t" style="font-size:11px;line-height:15px;color:#1e1e2d;top:354.5px;left:1163.1px;transform:scaleX(1.0316);transform-origin:0 50%;">09/12/2019</span>
<svg style="left:586px;top:378px" width="9" height="9" viewBox="0 0 9 9"><rect x="0.5" y="0.5" width="8" height="8" fill="#fdfdfd" stroke="#c9cad0"/><path d="M2 4.5 H7 M4.5 2 V7" stroke="#b9bac2" stroke-width="1"/></svg>
<div style="left:615px;top:376px;width:13px;height:13px;border:1px solid #9799a4;background:#fff;box-shadow:inset 0 0 0 1px #fff,inset 0 0 0 2px #dcdde3"></div>
<span class="t" style="font-size:11px;line-height:15px;color:#1e1e2d;top:375.5px;left:648.5px;">S</span>
<span class="t" style="font-size:11px;line-height:15px;color:#1e1e2d;top:375.5px;left:702.8px;transform:scaleX(0.9813);transform-origin:0 50%;">Service</span>
<span class="t" style="font-size:11px;line-height:15px;color:#1e1e2d;top:375.5px;left:853.6px;transform:scaleX(1.027);transform-origin:0 50%;">0.00</span>
<span class="t" style="font-size:11px;line-height:15px;color:#1e1e2d;top:375.5px;left:884px;transform:scaleX(1.0145);transform-origin:0 50%;">1101</span>
<span class="t" style="font-size:11px;line-height:15px;color:#1e1e2d;top:375.5px;left:1061.1px;transform:scaleX(0.9813);transform-origin:0 50%;">Service</span>
<span class="t" style="font-size:11px;line-height:15px;color:#1e1e2d;top:375.5px;left:1163.1px;transform:scaleX(1.0316);transform-origin:0 50%;">09/12/2019</span>
<svg style="left:586px;top:399px" width="9" height="9" viewBox="0 0 9 9"><rect x="0.5" y="0.5" width="8" height="8" fill="#fdfdfd" stroke="#c9cad0"/><path d="M2 4.5 H7 M4.5 2 V7" stroke="#b9bac2" stroke-width="1"/></svg>
<div style="left:615px;top:397px;width:13px;height:13px;border:1px solid #9799a4;background:#fff;box-shadow:inset 0 0 0 1px #fff,inset 0 0 0 2px #dcdde3"></div>
<span class="t" style="font-size:11px;line-height:15px;color:#1e1e2d;top:396.5px;left:648.5px;">I</span>
<span class="t" style="font-size:11px;line-height:15px;color:#1e1e2d;top:396.5px;left:702.8px;transform:scaleX(0.9865);transform-origin:0 50%;">Inhouse Rental</span>
<span class="t" style="font-size:11px;line-height:15px;color:#1e1e2d;top:396.5px;left:853.6px;transform:scaleX(1.027);transform-origin:0 50%;">0.00</span>
<span class="t" style="font-size:11px;line-height:15px;color:#1e1e2d;top:396.5px;left:884px;transform:scaleX(0.9802);transform-origin:0 50%;">1201</span>
<span class="t" style="font-size:11px;line-height:15px;color:#1e1e2d;top:396.5px;left:1061.1px;transform:scaleX(0.9865);transform-origin:0 50%;">Inhouse Rental</span>
<span class="t" style="font-size:11px;line-height:15px;color:#1e1e2d;top:396.5px;left:1163.1px;transform:scaleX(1.0316);transform-origin:0 50%;">09/12/2019</span>
<svg style="left:586px;top:420px" width="9" height="9" viewBox="0 0 9 9"><rect x="0.5" y="0.5" width="8" height="8" fill="#fdfdfd" stroke="#c9cad0"/><path d="M2 4.5 H7 M4.5 2 V7" stroke="#b9bac2" stroke-width="1"/></svg>
<div style="left:615px;top:418px;width:13px;height:13px;border:1px solid #9799a4;background:#fff;box-shadow:inset 0 0 0 1px #fff,inset 0 0 0 2px #dcdde3"></div>
<span class="t" style="font-size:11px;line-height:15px;color:#1e1e2d;top:417.5px;left:648.5px;">N</span>
<span class="t" style="font-size:11px;line-height:15px;color:#1e1e2d;top:417.5px;left:702.8px;transform:scaleX(1.0039);transform-origin:0 50%;">Insurance</span>
<span class="t" style="font-size:11px;line-height:15px;color:#1e1e2d;top:417.5px;left:853.6px;transform:scaleX(1.027);transform-origin:0 50%;">0.00</span>
<span class="t" style="font-size:11px;line-height:15px;color:#1e1e2d;top:417.5px;left:884px;transform:scaleX(0.9802);transform-origin:0 50%;">1203</span>
<span class="t" style="font-size:11px;line-height:15px;color:#1e1e2d;top:417.5px;left:1061.1px;transform:scaleX(1.0039);transform-origin:0 50%;">Insurance</span>
<span class="t" style="font-size:11px;line-height:15px;color:#1e1e2d;top:417.5px;left:1163.1px;transform:scaleX(1.0316);transform-origin:0 50%;">09/12/2019</span>
<div style="left:569px;top:436px;width:663px;height:30px;background:#e6e7eb;border-top:1px solid #c6c8cf"></div>
<div style="left:796px;top:439px;width:83px;height:25px;background:#fff;border:1px solid #cfd1d7;border-top-color:#b9bbc3"></div>
<span class="t" style="font-size:11px;line-height:15px;color:#1e1e2d;top:444.8px;left:851.6px;transform:scaleX(1.027);transform-origin:0 50%;">0.00</span>
<div style="left:569px;top:466px;width:663px;height:15px;background:#f4f4f6"></div>
<div style="left:585px;top:471px;width:190px;height:7px;border:1px solid #a9abb5;border-radius:4px;background:linear-gradient(#f2f2f5,#d9dade)"></div>
<svg style="left:574px;top:471px" width="5" height="7" viewBox="0 0 5 7"><polygon points="4.5,0.5 4.5,6.5 0.8,3.5" fill="#8d8f9b"/></svg>
<svg style="left:1224px;top:471px" width="5" height="7" viewBox="0 0 5 7"><polygon points="0.5,0.5 0.5,6.5 4.2,3.5" fill="#8d8f9b"/></svg>
<div style="left:568px;top:241px;width:70px;height:3px;background:#000"></div>
<div style="left:568px;top:241px;width:3px;height:26px;background:#000"></div>
<div style="left:635px;top:241px;width:3px;height:26px;background:#000"></div>
<div style="left:635px;top:243px;width:78px;height:3px;background:#000"></div>
<div style="left:635px;top:264px;width:78px;height:3px;background:#000"></div>
<div style="left:710px;top:243px;width:3px;height:24px;background:#000"></div>
<div style="left:710px;top:243px;width:93px;height:3px;background:#000"></div>
<div style="left:710px;top:264px;width:93px;height:3px;background:#000"></div>
<div style="left:800px;top:243px;width:3px;height:24px;background:#000"></div>
<div style="left:800px;top:243px;width:92px;height:3px;background:#000"></div>
<div style="left:800px;top:264px;width:92px;height:3px;background:#000"></div>
<div style="left:889px;top:243px;width:3px;height:24px;background:#000"></div>
<div style="left:566px;top:480px;width:670px;height:3px;background:#000"></div>
<div style="left:566px;top:264px;width:3px;height:219px;background:#000"></div>
<div style="left:1233px;top:264px;width:3px;height:219px;background:#000"></div>
<div style="left:634px;top:264px;width:602px;height:3px;background:#000"></div>
<div style="left:2px;top:715px;width:1245px;height:28px;background:linear-gradient(#e0e1e5 0,#d5d6db 45%,#cecfd5 100%);border-top:1px solid #a4a6af;border-bottom:1px solid #a9abb3"></div>
<div style="left:2px;top:716px;width:1245px;height:1px;background:#eeeff2"></div>
<div style="left:2px;top:743px;width:1245px;height:4px;background:#e4e5e9"></div>
<div style="left:2px;top:27px;width:3px;height:720px;background:linear-gradient(90deg,#e6e7eb,#d8d9de)"></div>
<div style="left:1243px;top:48px;width:4px;height:699px;background:linear-gradient(90deg,#d6d7dc,#ecedf0)"></div>
<span class="t" style="font-size:11px;line-height:15px;color:#1e1e2d;top:721.5px;left:11.9px;transform:scaleX(0.925);transform-origin:0 50%;">Open Windows</span>
<svg style="left:87px;top:726px" width="8" height="5" viewBox="0 0 8 5"><polygon points="0.5,0.5 7.5,0.5 4,4.3" fill="#15151f"/></svg>
<div style="left:791px;top:720px;width:1px;height:18px;background:#bfc1c8"></div>
<div style="left:792px;top:720px;width:1px;height:18px;background:#eeeff2"></div>
<div style="left:879px;top:720px;width:1px;height:18px;background:#bfc1c8"></div>
<div style="left:880px;top:720px;width:1px;height:18px;background:#eeeff2"></div>
<div style="left:951px;top:720px;width:1px;height:18px;background:#bfc1c8"></div>
<div style="left:952px;top:720px;width:1px;height:18px;background:#eeeff2"></div>
<div style="left:1050px;top:720px;width:1px;height:18px;background:#bfc1c8"></div>
<div style="left:1051px;top:720px;width:1px;height:18px;background:#eeeff2"></div>
<span class="t" style="font-size:11px;line-height:15px;color:#1e1e2d;top:721.5px;left:800.4px;transform:scaleX(0.9969);transform-origin:0 50%;">User : JudithM</span>
<span class="t" style="font-size:11px;line-height:15px;color:#1e1e2d;top:721.5px;left:887.4px;transform:scaleX(1.0261);transform-origin:0 50%;">09/12/2019</span>
<span class="t" style="font-size:11px;line-height:15px;color:#1e1e2d;top:721.5px;left:960.3px;transform:scaleX(1.0314);transform-origin:0 50%;">Version : 2.3.0.4</span>
<span class="t" style="font-size:11px;line-height:15px;color:#1e1e2d;top:721.5px;left:1058.1px;transform:scaleX(0.9089);transform-origin:0 50%;">TEST ALPHA - JUDITH PC LOCAL</span>
<svg style="left:1230px;top:729px" width="13" height="13" viewBox="0 0 13 13"><path d="M12 1 L1 12 M12 5 L5 12 M12 9 L9 12" stroke="#9a9ca6" stroke-width="1"/><path d="M12.8 1.8 L1.8 12.8 M12.8 5.8 L5.8 12.8 M12.8 9.8 L9.8 12.8" stroke="#fff" stroke-width="0.8"/></svg>
</body></html>
